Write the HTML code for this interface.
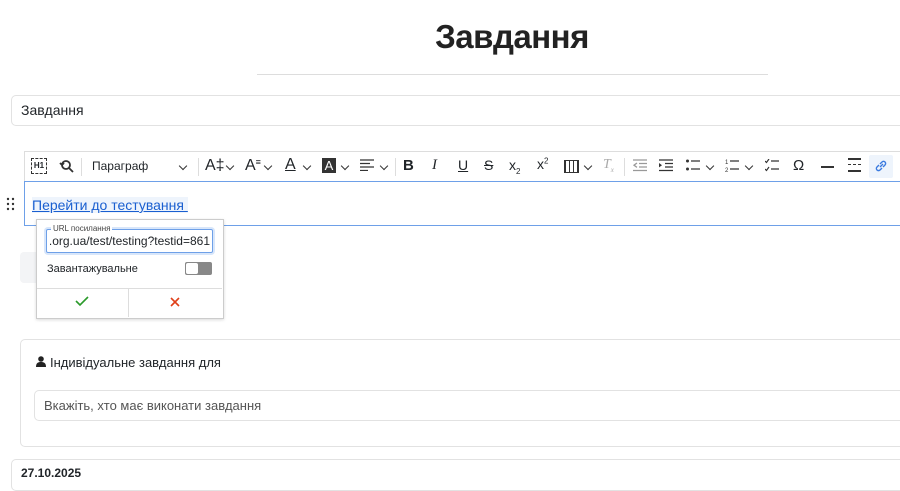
<!DOCTYPE html>
<html><head><meta charset="utf-8"><style>
body{margin:0;width:900px;height:471px;overflow:hidden;background:#fff;font-family:"Liberation Sans",sans-serif;color:#212529;position:relative}
.a{position:absolute}
svg{position:absolute}
.ch{position:absolute;width:5px;height:5px;border-right:1.3px solid #333;border-bottom:1.3px solid #333;transform:rotate(45deg)}
</style></head><body>
<div class="a" style="left:0;width:1024px;top:18px;text-align:center;font-size:33px;font-weight:bold;color:#222;letter-spacing:-0.5px">Завдання</div>
<div class="a" style="left:257px;top:74px;width:511px;height:1px;background:#ddd"></div>
<div class="a" style="left:11px;top:95px;width:900px;height:29px;border:1px solid #e2e2e2;border-radius:5px"></div>
<div class="a" style="left:21px;top:102px;font-size:14px">Завдання</div>

<div class="a" style="left:24px;top:151px;width:890px;height:30px;border:1px solid #ddd;border-bottom:none;background:#fff"></div>
<div class="a" style="left:24px;top:181px;width:890px;height:43px;border:1px solid #6ea0e8"></div>
<!-- toolbar -->
<div class="a" style="left:31px;top:158px;width:14px;height:14px;border:1px dashed #333;font-size:8px;font-weight:bold;line-height:14px;text-align:center">H1</div>
<svg style="left:58px;top:158px" width="16" height="16" viewBox="0 0 16 16"><circle cx="8" cy="7" r="4" fill="none" stroke="#333" stroke-width="1.8"/><path d="M11 10l4 4M2 5l2 2 2-2" stroke="#333" stroke-width="1.8" fill="none"/></svg>
<div class="a" style="left:81px;top:158px;width:1px;height:18px;background:#ddd"></div>
<div class="a" style="left:92px;top:159px;font-size:12px">Параграф</div>
<div class="ch" style="left:180px;top:163px"></div>
<div class="a" style="left:198px;top:158px;width:1px;height:18px;background:#ddd"></div>
<div class="a" style="left:205px;top:157px;font-size:16px">A‡</div><div class="ch" style="left:227px;top:163px"></div>
<div class="a" style="left:245px;top:157px;font-size:16px">A<span style="font-size:9px;vertical-align:top">≡</span></div><div class="ch" style="left:265px;top:163px"></div>
<div class="a" style="left:285px;top:156px;font-size:16px;text-decoration:underline">A</div><div class="ch" style="left:304px;top:163px"></div>
<div class="a" style="left:322px;top:158px;width:14px;height:15px;background:#333;color:#fff;font-size:13px;text-align:center;line-height:15px">A</div><div class="ch" style="left:342px;top:163px"></div>
<svg style="left:360px;top:159px" width="14" height="12"><path d="M0 1h14M0 4.5h10M0 8h14M0 11.5h8" stroke="#333" stroke-width="1.3"/></svg><div class="ch" style="left:381px;top:163px"></div>
<div class="a" style="left:395px;top:158px;width:1px;height:18px;background:#ddd"></div>
<div class="a" style="left:403px;top:157px;font-size:15px;font-weight:bold">B</div>
<div class="a" style="left:432px;top:157px;font-size:15px;font-style:italic;font-family:'Liberation Serif'">I</div>
<div class="a" style="left:458px;top:157px;font-size:14px;text-decoration:underline">U</div>
<div class="a" style="left:484px;top:157px;font-size:14px;text-decoration:line-through">S</div>
<div class="a" style="left:509px;top:157px;font-size:14px">x<sub style="font-size:8px">2</sub></div>
<div class="a" style="left:537px;top:156px;font-size:14px">x<sup style="font-size:8px">2</sup></div>
<div class="a" style="left:564px;top:160px;width:13px;height:11px;border:1px solid #333;background:repeating-linear-gradient(90deg,#333 0 1px,transparent 1px 4px),#fff"></div>
<div class="ch" style="left:585px;top:163px"></div>
<div class="a" style="left:603px;top:157px;font-size:14px;color:#aaa;font-style:italic;font-family:'Liberation Serif'">T<sub style="font-size:7px">x</sub></div>
<div class="a" style="left:624px;top:158px;width:1px;height:18px;background:#ddd"></div>
<svg style="left:633px;top:159px" width="14" height="13"><path d="M0 1h14M6 4.5h8M6 8h8M0 11.5h14M4 4l-3 2.2 3 2.2" stroke="#999" stroke-width="1.3" fill="none"/></svg>
<svg style="left:659px;top:159px" width="14" height="13"><path d="M0 1h14M6 4.5h8M6 8h8M0 11.5h14" stroke="#333" stroke-width="1.3" fill="none"/><path d="M0 4l3 2.2-3 2.2z" fill="#333"/></svg>
<svg style="left:686px;top:159px" width="14" height="13"><circle cx="1.5" cy="2" r="1.5" fill="#333"/><circle cx="1.5" cy="10" r="1.5" fill="#333"/><path d="M5 2h9M5 10h9" stroke="#333" stroke-width="1.3"/></svg><div class="ch" style="left:707px;top:163px"></div>
<svg style="left:725px;top:158px" width="14" height="14"><text x="0" y="6" font-size="6" fill="#333">1</text><text x="0" y="14" font-size="6" fill="#333">2</text><path d="M5 3h9M5 11h9" stroke="#333" stroke-width="1.3"/></svg><div class="ch" style="left:746px;top:163px"></div>
<svg style="left:765px;top:159px" width="14" height="13"><path d="M0 2l1.5 1.5L4 0M0 10l1.5 1.5L4 8M6 2h8M6 10h8" stroke="#333" stroke-width="1.2" fill="none"/></svg>
<div class="a" style="left:793px;top:157px;font-size:15px">Ω</div>
<div class="a" style="left:821px;top:166px;width:13px;height:2px;background:#333"></div>
<div class="a" style="left:848px;top:158px;width:13px;height:14px;border-top:2px solid #333;border-bottom:2px solid #333;box-sizing:border-box"></div>
<div class="a" style="left:848px;top:164px;width:13px;height:1px;border-top:1px dashed #333"></div>
<div class="a" style="left:869px;top:155px;width:24px;height:23px;background:#eef4fc;border-radius:2px"></div>
<svg style="left:874px;top:159px" width="14" height="14" viewBox="0 0 14 14"><path d="M6 8l3-3M5 6l-2 2a2 2 0 003 3l2-2M9 8l2-2a2 2 0 00-3-3L6 5" stroke="#3a7ae0" stroke-width="1.4" fill="none"/></svg>

<svg style="left:6px;top:197px" width="10" height="15"><g fill="#333"><circle cx="2" cy="2" r="1.2"/><circle cx="7" cy="2" r="1.2"/><circle cx="2" cy="7" r="1.2"/><circle cx="7" cy="7" r="1.2"/><circle cx="2" cy="12" r="1.2"/><circle cx="7" cy="12" r="1.2"/></g></svg>
<div class="a" style="left:32px;top:197px;font-size:14px;color:#1a5fd0;text-decoration:underline;background:#eef4fc">Перейти до тестування&nbsp;</div>

<div class="a" style="left:20px;top:252px;width:110px;height:31px;background:#f3f4f6;border-radius:4px"></div>
<!-- popup -->
<div class="a" style="left:36px;top:219px;width:186px;height:98px;background:#fff;border:1px solid #ccc;box-shadow:0 1px 3px rgba(0,0,0,.15)"></div>
<div class="a" style="left:46px;top:229px;width:165px;height:22px;border:1px solid #6ea0e8;border-radius:2px;box-shadow:0 0 0 2px #d8e6fa"></div>
<div class="a" style="left:51px;top:224px;font-size:8px;background:#fff;padding:0 2px;color:#444">URL посилання</div>
<div class="a" style="left:50px;top:234px;width:160px;height:16px;overflow:hidden;white-space:nowrap"><span class="a" style="right:0;top:0;font-size:12px">t.vmk.org.ua/test/testing?testid=861</span></div>
<div class="a" style="left:47px;top:263px;font-size:11px">Завантажувальне</div>
<div class="a" style="left:185px;top:262px;width:27px;height:13px;background:#888;border-radius:2px"></div>
<div class="a" style="left:186px;top:263px;width:12px;height:11px;background:#fff;border-radius:2px"></div>
<div class="a" style="left:37px;top:288px;width:185px;height:1px;background:#ddd"></div>
<div class="a" style="left:128px;top:288px;width:1px;height:29px;background:#ddd"></div>
<svg style="left:75px;top:296px" width="14" height="11"><path d="M1 5l4 4 8-8" stroke="#2a9a2a" stroke-width="1.6" fill="none"/></svg>
<svg style="left:170px;top:297px" width="10" height="10"><path d="M1 1l8 8M9 1l-8 8" stroke="#e0401a" stroke-width="1.6"/></svg>

<div class="a" style="left:20px;top:339px;width:900px;height:106px;border:1px solid #e2e2e2;border-radius:5px"></div>
<svg style="left:36px;top:356px" width="10" height="11"><circle cx="5" cy="3" r="2.8" fill="#222"/><path d="M0 11c0-4 2-5 5-5s5 1 5 5z" fill="#222"/></svg>
<div class="a" style="left:50px;top:355px;font-size:13px">Індивідуальне завдання для</div>
<div class="a" style="left:34px;top:390px;width:900px;height:29px;border:1px solid #e2e2e2;border-radius:5px"></div>
<div class="a" style="left:44px;top:398px;font-size:13px;color:#555">Вкажіть, хто має виконати завдання</div>
<div class="a" style="left:11px;top:459px;width:900px;height:30px;border:1px solid #e2e2e2;border-radius:5px"></div>
<div class="a" style="left:21px;top:466px;font-size:12px;font-weight:bold">27.10.2025</div>
</body></html>
